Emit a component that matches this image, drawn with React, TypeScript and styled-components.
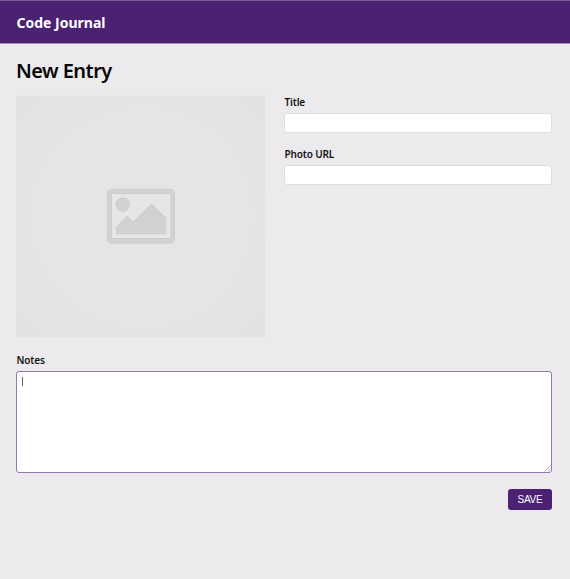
import React from 'react';
import styled, { createGlobalStyle } from 'styled-components';

const GlobalStyle = createGlobalStyle`
  *, *::before, *::after { box-sizing: border-box; }
  html { background: #eceaed; }
  body {
    margin: 0;
    overflow: hidden;
    color: #111;
    font-family: "Noto Sans", "Open Sans", sans-serif;
  }
`;

const Page = styled.div`
  min-height: 579px;
  background: #eceaed;
`;

const Header = styled.header`
  display: flex;
  align-items: center;
  height: 44px;
  padding: 2px 16px 0;
  background: #4b2272;
  border-top: 1px solid #7a5c98;
  border-bottom: 1px solid #a58fb9;
`;

const Brand = styled.span`
  padding-left: 0.5px;
  color: #fff;
  font-size: 14px;
  font-weight: 700;
  line-height: 20px;
  letter-spacing: 0;
`;

const Main = styled.main`
  padding: 14px 18px 0 16px;
`;

const Heading = styled.h1`
  margin: 0 0 11px;
  color: #080808;
  font-size: 20px;
  font-weight: 600;
  line-height: 26px;
  letter-spacing: -0.55px;
`;

const Columns = styled.div`
  display: grid;
  grid-template-columns: 249px 1fr;
  column-gap: 19px;
`;

const Placeholder = styled.div`
  display: flex;
  justify-content: center;
  height: 242px;
  padding-top: 92px;
  background: radial-gradient(circle, #e5e5e5 65%, #e2e2e2 100%);
  border-top: 1px solid #e8e7e9;
`;

const Fields = styled.div`
  display: flex;
  flex-direction: column;
  gap: 14px;
`;

const Field = styled.div`
  display: flex;
  flex-direction: column;
`;

const Label = styled.label`
  height: 18px;
  padding-left: 0.5px;
  font-size: 10px;
  font-weight: 600;
  line-height: 14px;
  letter-spacing: -0.15px;
`;

const Input = styled.input`
  width: 100%;
  height: 20px;
  margin: 0;
  padding: 0 5px;
  background: #fff;
  border: 1px solid #dddde0;
  border-radius: 3px;
  outline: none;
`;

const NotesField = styled(Field)`
  margin-top: 16px;
`;

const NotesBox = styled.div`
  position: relative;
  display: flex;
`;

const Notes = styled.textarea`
  width: 100%;
  height: 102px;
  margin: 0;
  padding: 4px 5px;
  background: #fff;
  border: 1px solid #9278ad;
  border-radius: 3px;
  outline: none;
  resize: none;
  caret-color: transparent;
`;

const Caret = styled.span`
  position: absolute;
  top: 6px;
  left: 6px;
  width: 1px;
  height: 9px;
  background: #666;
`;

const Grip = styled.svg`
  position: absolute;
  right: 1px;
  bottom: 1px;
`;

const Actions = styled.div`
  display: flex;
  justify-content: flex-end;
  margin-top: 16px;
`;

const SaveButton = styled.button`
  width: 44px;
  height: 21px;
  padding: 0;
  color: #fff;
  background: #4b2272;
  border: 0;
  border-radius: 3px;
  font: 10px/21px "Liberation Sans", Arial, sans-serif;
  letter-spacing: -0.2px;
`;

function PictureIcon() {
  return (
    <svg width="70" height="57" viewBox="0 0 70 57" aria-hidden="true">
      <rect x="1" y="1.5" width="68" height="54.5" rx="5" fill="#dbdbdb" />
      <rect x="1" y="0.8" width="68" height="54.4" rx="5" fill="#cbcbcb" />
      <rect x="1.8" y="1.6" width="66.4" height="52.8" rx="4.5" fill="#d3d3d3" />
      <rect x="5.3" y="5.3" width="60" height="45.5" fill="#cacaca" />
      <rect x="6" y="6" width="58.5" height="44" fill="#e6e6e6" />
      <circle cx="16.8" cy="16.6" r="7.2" fill="#c9c9c9" />
      <circle cx="17" cy="17" r="6.8" fill="#d2d2d2" />
      <path d="M10 39.5 21.5 28.2 27 34 45.5 15.8 60.5 30.5V46.5H10Z" fill="#d1d1d1" />
      <path d="m10 39.5 11.5-11.3L27 34 45.5 15.8l15 14.7" fill="none" stroke="#c5c5c5" strokeWidth="0.6" />
    </svg>
  );
}

export default function App() {
  return (
    <>
      <GlobalStyle />
      <Page>
        <Header>
          <Brand>Code Journal</Brand>
        </Header>
        <Main>
          <Heading>New Entry</Heading>
          <Columns>
            <Placeholder>
              <PictureIcon />
            </Placeholder>
            <Fields>
              <Field>
                <Label htmlFor="title">Title</Label>
                <Input id="title" />
              </Field>
              <Field>
                <Label htmlFor="photo">Photo URL</Label>
                <Input id="photo" />
              </Field>
            </Fields>
          </Columns>
          <NotesField>
            <Label htmlFor="notes">Notes</Label>
            <NotesBox>
              <Notes id="notes" />
              <Caret />
              <Grip width="7" height="7" viewBox="0 0 7 7" aria-hidden="true">
                <path d="M0.5 6.5l6-6M3.5 6.5l3-3" stroke="#9a9a9a" strokeWidth="0.8" />
              </Grip>
            </NotesBox>
          </NotesField>
          <Actions>
            <SaveButton type="button">SAVE</SaveButton>
          </Actions>
        </Main>
      </Page>
    </>
  );
}
